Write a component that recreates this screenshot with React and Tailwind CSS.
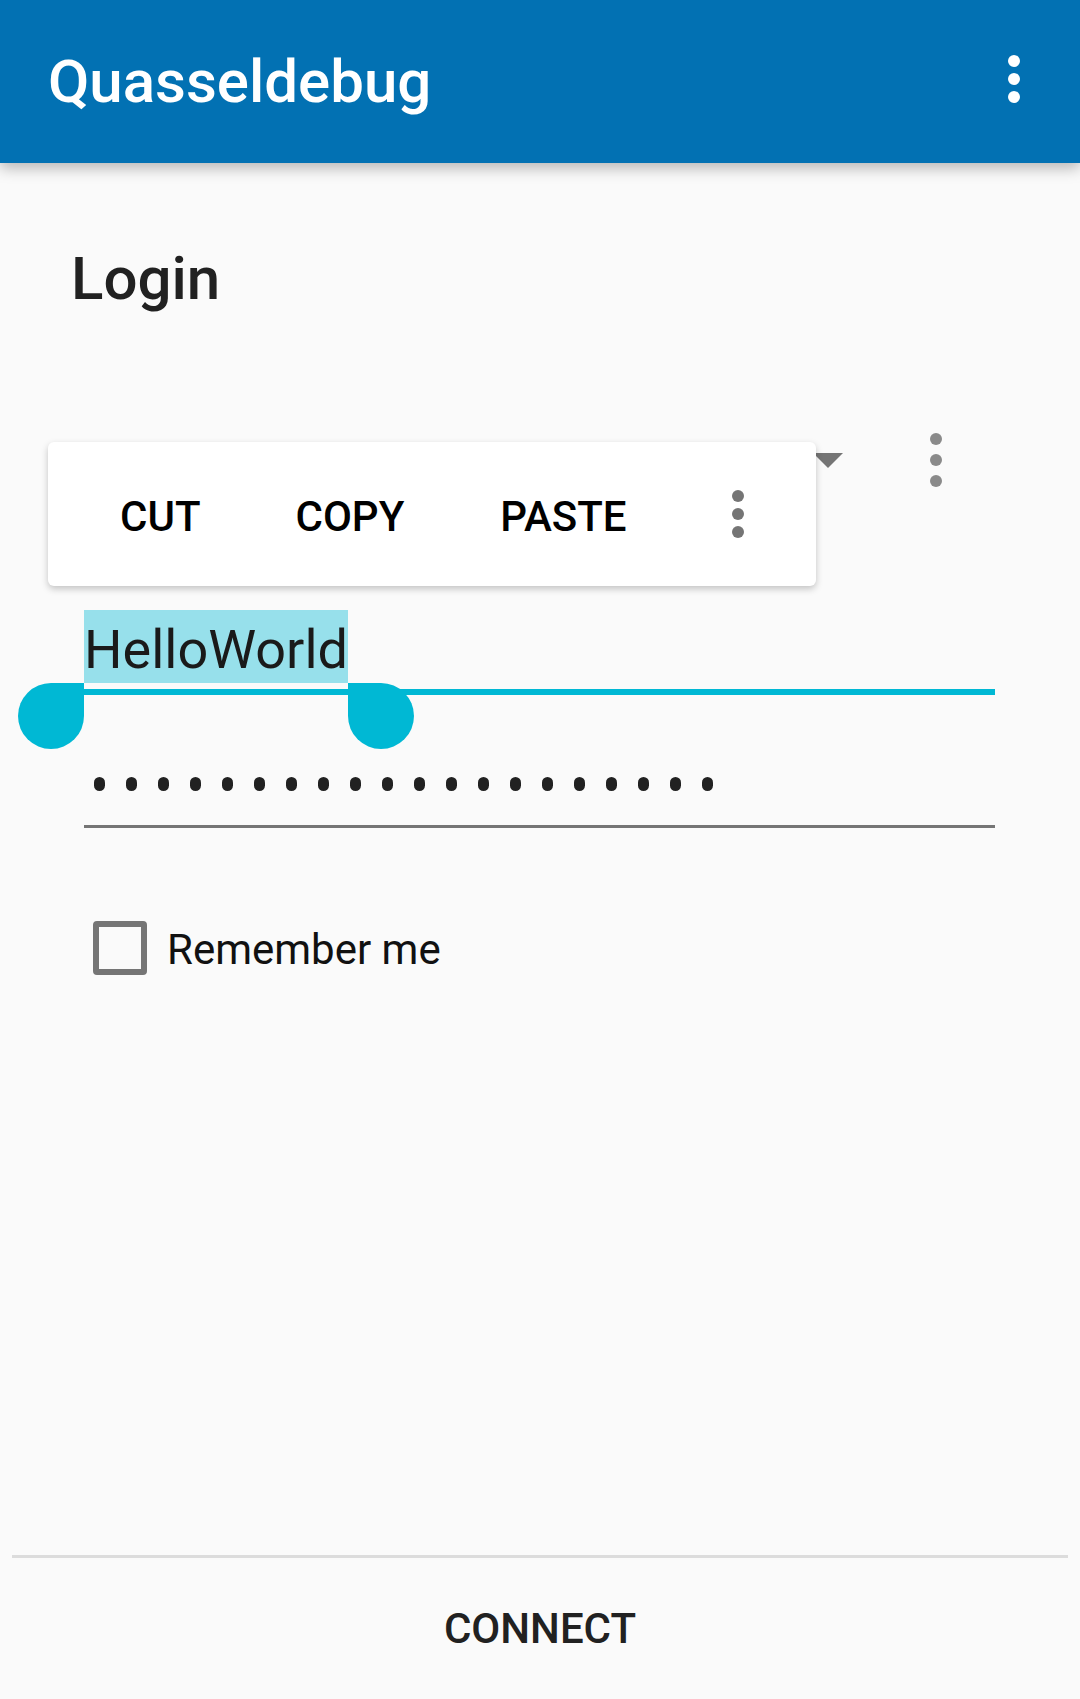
import React from 'react';

function Kebab({ color, gap = 18, size = 12, className = '' }) {
  const r = size / 2;
  const h = size + gap * 2;
  return (
    <svg width={size} height={h} viewBox={`0 0 ${size} ${h}`} className={className} aria-hidden>
      <circle cx={r} cy={r} r={r} fill={color} />
      <circle cx={r} cy={r + gap} r={r} fill={color} />
      <circle cx={r} cy={r + gap * 2} r={r} fill={color} />
    </svg>
  );
}

export default function App() {
  return (
    <div className="relative flex h-[1699px] w-[1080px] flex-col overflow-hidden bg-[#fafafa] font-[Roboto,sans-serif]">
      {/* app bar */}
      <header className="relative z-10 flex h-[163px] shrink-0 items-center justify-between bg-[#0271b3] pl-[48px] pr-[60px] shadow-[0_5px_14px_rgba(0,0,0,0.28)]">
        <h1 className="text-[60px] font-medium leading-[72px] text-white">Quasseldebug</h1>
        <Kebab color="#ffffff" className="mb-[5px]" />
      </header>

      <h2 className="mt-[80px] pl-[71px] text-[60px] font-medium leading-[72px] text-[#212121]">Login</h2>

      {/* account spinner row (covered by the text toolbar) */}
      <div className="mt-[95px] flex h-[100px] items-center justify-end gap-[87px] pr-[138px]">
        <svg width="30" height="15" viewBox="0 0 30 15" aria-hidden>
          <path d="M0 0 L30 0 L15 15 Z" fill="#757575" />
        </svg>
        <Kebab color="#8a8a8a" gap={21} />
      </div>

      {/* user field with selection */}
      <div className="relative ml-[84px] mt-[100px] w-[911px]">
        <span className="inline-block bg-[#97e0eb] pb-[2px] pt-[8px] text-[54px] leading-[63px] text-[#1a1a1a]">
          HelloWorld
        </span>
        <div className="mt-[6px] h-[6px] bg-[#00b8d4]" />
        <span className="absolute left-[-66px] top-[73px] h-[66px] w-[66px] rounded-tl-[33px] rounded-bl-[33px] rounded-br-[33px] bg-[#00b8d4]" />
        <span className="absolute left-[264px] top-[73px] h-[66px] w-[66px] rounded-tr-[33px] rounded-bl-[33px] rounded-br-[33px] bg-[#00b8d4]" />
      </div>

      {/* password field */}
      <div className="ml-[84px] w-[911px] pt-[82px]">
        <div className="flex h-[14px] gap-[21px] pl-[10px]">
          {Array.from({ length: 20 }).map((_, i) => (
            <span key={i} className="h-[14px] w-[11px] rounded-full bg-[#212121]" />
          ))}
        </div>
        <div className="mt-[34px] h-[3px] bg-[#757575]" />
      </div>

      {/* remember me */}
      <label className="ml-[93px] mt-[93px] flex items-center gap-[20px]">
        <span className="h-[54px] w-[54px] rounded-[4px] border-[6px] border-[#757575]" />
        <span className="pt-[3px] text-[42px] leading-[50px] text-[#111111]">Remember me</span>
      </label>

      <div className="flex-1" />

      <div className="mx-[12px] h-[3px] bg-[#dcdcdc]" />
      <button className="flex h-[141px] shrink-0 items-center justify-center text-[42px] font-medium text-[#212121]">
        CONNECT
      </button>

      {/* floating text selection toolbar */}
      <div className="absolute left-[48px] top-[442px] z-20 flex h-[144px] w-[768px] items-center rounded-[6px] bg-white pl-[72px] pt-[5px] shadow-[0_3px_7px_rgba(0,0,0,0.22)]">
        <span className="text-[42px] font-medium leading-[50px] text-black">CUT</span>
        <span className="ml-[95px] text-[42px] font-medium leading-[50px] text-black">COPY</span>
        <span className="ml-[96px] text-[42px] font-medium leading-[50px] text-black">PASTE</span>
        <Kebab color="#757575" className="mb-[5px] ml-[105px]" />
      </div>
    </div>
  );
}
